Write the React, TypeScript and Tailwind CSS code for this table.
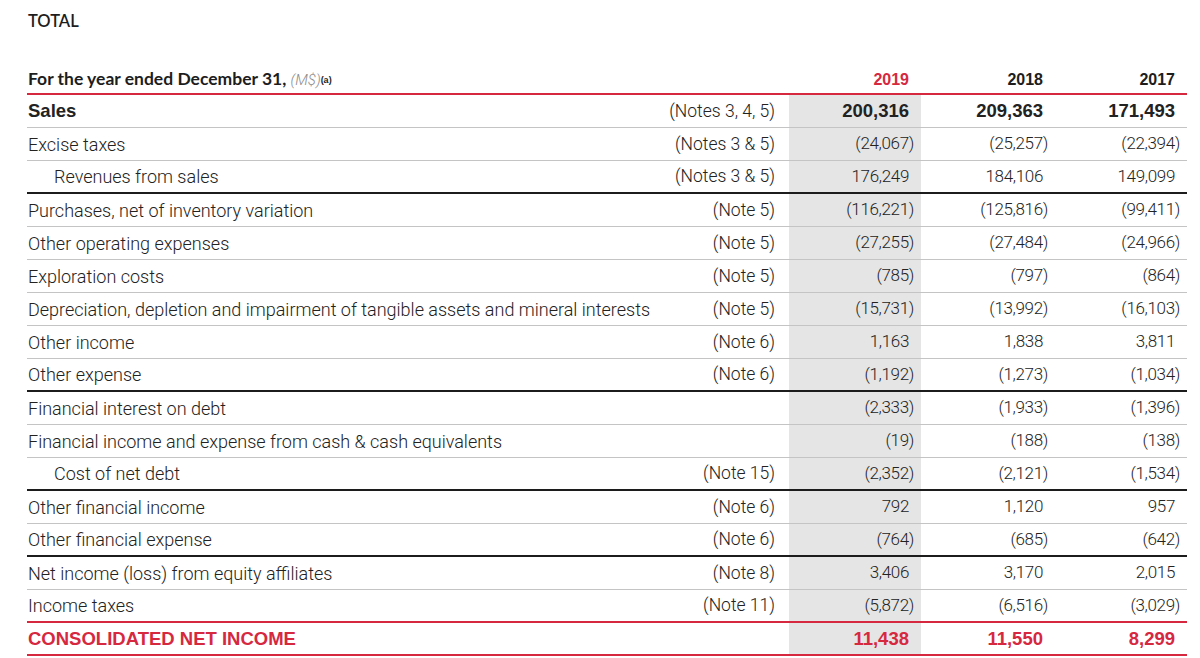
type Line = "gray" | "black" | "red";

type Row = {
  label: string;
  note: string;
  values: [string, string, string];
  indent?: boolean;
  bold?: boolean;
  total?: boolean;
  line: Line;
};

const rows: Row[] = [
  { label: "Sales", note: "(Notes 3, 4, 5)", values: ["200,316", "209,363", "171,493"], bold: true, line: "gray" },
  { label: "Excise taxes", note: "(Notes 3 & 5)", values: ["(24,067)", "(25,257)", "(22,394)"], line: "gray" },
  { label: "Revenues from sales", note: "(Notes 3 & 5)", values: ["176,249", "184,106", "149,099"], indent: true, line: "black" },
  { label: "Purchases, net of inventory variation", note: "(Note 5)", values: ["(116,221)", "(125,816)", "(99,411)"], line: "gray" },
  { label: "Other operating expenses", note: "(Note 5)", values: ["(27,255)", "(27,484)", "(24,966)"], line: "gray" },
  { label: "Exploration costs", note: "(Note 5)", values: ["(785)", "(797)", "(864)"], line: "gray" },
  { label: "Depreciation, depletion and impairment of tangible assets and mineral interests", note: "(Note 5)", values: ["(15,731)", "(13,992)", "(16,103)"], line: "gray" },
  { label: "Other income", note: "(Note 6)", values: ["1,163", "1,838", "3,811"], line: "gray" },
  { label: "Other expense", note: "(Note 6)", values: ["(1,192)", "(1,273)", "(1,034)"], line: "black" },
  { label: "Financial interest on debt", note: "", values: ["(2,333)", "(1,933)", "(1,396)"], line: "gray" },
  { label: "Financial income and expense from cash & cash equivalents", note: "", values: ["(19)", "(188)", "(138)"], line: "gray" },
  { label: "Cost of net debt", note: "(Note 15)", values: ["(2,352)", "(2,121)", "(1,534)"], indent: true, line: "black" },
  { label: "Other financial income", note: "(Note 6)", values: ["792", "1,120", "957"], line: "gray" },
  { label: "Other financial expense", note: "(Note 6)", values: ["(764)", "(685)", "(642)"], line: "black" },
  { label: "Net income (loss) from equity affiliates", note: "(Note 8)", values: ["3,406", "3,170", "2,015"], line: "gray" },
  { label: "Income taxes", note: "(Note 11)", values: ["(5,872)", "(6,516)", "(3,029)"], line: "red" },
  { label: "CONSOLIDATED NET INCOME", note: "", values: ["11,438", "11,550", "8,299"], total: true, line: "red" },
];

const lineClass: Record<Line, string> = {
  gray: "border-b border-[#c4c4c4]",
  black: "border-b-2 border-[#1c1c1c]",
  red: "border-b-2 border-[#d6283f]",
};

// closing paren hangs out of the column, so plain numbers get a small spacer
function Num({ v }: { v: string }) {
  if (v.startsWith("(")) return <>{v}</>;
  return (
    <>
      {v}
      <span className="inline-block w-[5px]" />
    </>
  );
}

export default function App() {
  const light = "font-['Roboto','Liberation_Sans',sans-serif] font-light";
  const strong = "font-['Liberation_Sans','Arial',sans-serif] font-bold";
  const head = "font-['Lato','Open_Sans',sans-serif]";

  return (
    <div className="w-[1200px] h-[658px] overflow-hidden bg-white text-[#222]">
      <div className="pl-[27px] pr-[13px] pt-[11px]">
        <div className={`${head} text-[16.5px] leading-[20px] font-semibold text-[#1d1d1d] pl-[1px]`}>TOTAL</div>

        {/* header row */}
        <div className="flex h-[64px] items-end pb-[3px] border-b-2 border-[#d6283f]">
          <div className={`flex-1 min-w-0 pl-[1px] ${head} text-[17.5px] leading-[20px] font-bold text-[#1d1d1d] whitespace-nowrap`}>
            For the year ended December 31,{" "}
            <span className={`${light} italic text-[15px] text-[#8c8c8c]`}>(M$)</span>
            <sup className={`${strong} text-[9px] text-[#1d1d1d] relative -top-[2px]`}>(a)</sup>
          </div>
          {["2019", "2018", "2017"].map((y, i) => (
            <div
              key={y}
              className={`shrink-0 ${i === 1 ? "w-[134px]" : "w-[132px]"} pr-[12px] text-right ${strong} text-[16px] leading-[20px] ${i === 0 ? "text-[#d6283f]" : "text-[#1d1d1d]"}`}
            >
              {y}
            </div>
          ))}
        </div>

        {rows.map((r) => {
          const big = r.bold || r.total;
          const color = r.total ? "text-[#d6283f]" : "text-[#222]";
          return (
            <div key={r.label} className={`flex h-[33px] box-border ${lineClass[r.line]} ${color}`}>
              <div
                className={`flex-1 min-w-0 flex items-center ${r.indent ? "pl-[27px]" : "pl-[1px]"} whitespace-nowrap ${big ? `${strong} text-[18.5px]` : `${light} text-[18px]`}`}
              >
                {r.label}
              </div>
              <div className={`shrink-0 w-[118px] flex items-center justify-end pr-[14px] ${light} text-[17.5px] text-[#222] whitespace-nowrap`}>
                {r.note}
              </div>
              {r.values.map((v, i) => (
                <div
                  key={i}
                  className={`shrink-0 ${i === 1 ? "w-[134px]" : "w-[132px]"} flex items-center justify-end pr-[7px] ${big ? `${strong} text-[18.5px]` : `${light} text-[17px] tracking-[-0.02em]`} ${i === 0 ? "bg-[#e5e5e5]" : ""}`}
                >
                  <Num v={v} />
                </div>
              ))}
            </div>
          );
        })}
      </div>
    </div>
  );
}
